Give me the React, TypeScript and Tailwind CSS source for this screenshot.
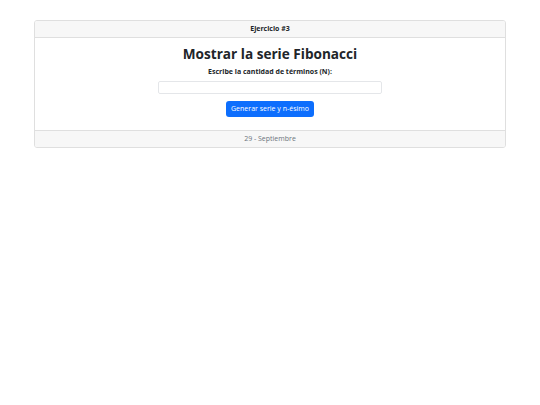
export default function App() {
  return (
    <div className="min-h-[405px] bg-white pt-[20px] font-['Open_Sans',sans-serif] text-[#212529]">
      <div className="mx-[34px] overflow-hidden rounded-[3px] border border-[#dfdfdf]">
        {/* Header */}
        <div className="border-b border-[#dfdfdf] bg-[#f7f7f7] px-[7px] py-[2.5px] text-center text-[7px] leading-[10.5px] font-bold">
          Ejercicio #3
        </div>

        {/* Body */}
        <div className="flex flex-col items-center px-[7px] pt-[7px] pb-[13px]">
          <h2 className="mb-[5.5px] text-[13.6px] leading-[17px] font-bold">Mostrar la serie Fibonacci</h2>
          <label className="mb-[3.5px] text-[7px] leading-[10.5px] font-bold">
            Escribe la cantidad de términos (N):
          </label>
          <input
            type="number"
            className="mb-[7px] h-[13px] w-[224px] rounded-[2px] border border-[#e4e6e9] bg-white outline-none"
          />
          <button className="h-[16px] rounded-[3px] bg-[#0d6efd] px-[5px] text-[7px] leading-[10.5px] text-white">
            Generar serie y n-ésimo
          </button>
        </div>

        {/* Footer */}
        <div className="border-t border-[#dfdfdf] bg-[#f7f7f7] px-[7px] py-[2.5px] text-center text-[7px] leading-[10.5px] text-[#6c757d]">
          29 - Septiembre
        </div>
      </div>
    </div>
  );
}
